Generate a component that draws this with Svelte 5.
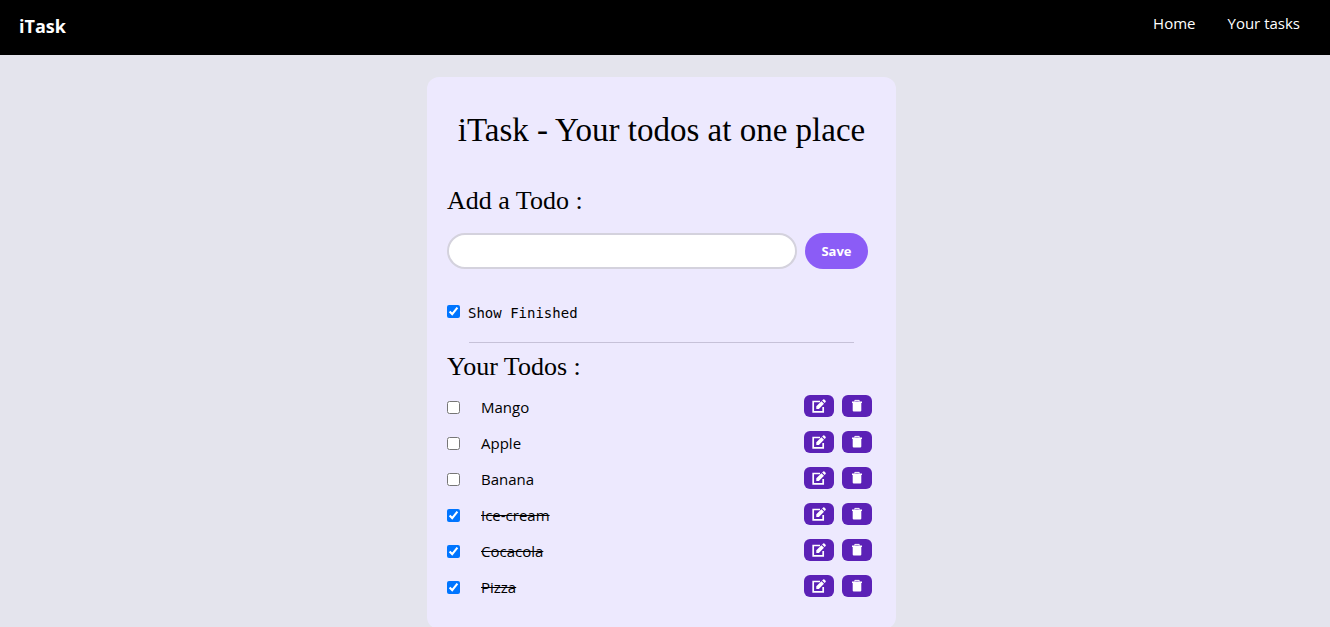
<script>
  let draft = $state('');
  let showFinished = $state(true);
  let todos = $state([
    { id: 1, text: 'Mango', done: false },
    { id: 2, text: 'Apple', done: false },
    { id: 3, text: 'Banana', done: false },
    { id: 4, text: 'Ice-cream', done: true },
    { id: 5, text: 'Cocacola', done: true },
    { id: 6, text: 'Pizza', done: true }
  ]);
  let nextId = 7;

  function save(event) {
    event.preventDefault();
    if (!draft.trim()) return;
    todos.push({ id: nextId++, text: draft.trim(), done: false });
    draft = '';
  }

  function remove(id) {
    todos = todos.filter((t) => t.id !== id);
  }

  function edit(todo) {
    draft = todo.text;
    remove(todo.id);
  }
</script>

<nav>
  <span class="brand">iTask</span>
  <ul class="links">
    <li><a href="#home">Home</a></li>
    <li><a href="#tasks">Your tasks</a></li>
  </ul>
</nav>

<main>
  <div class="card">
    <h1>iTask - Your todos at one place</h1>
    <h2><label for="todo">Add a Todo :</label></h2>
    <form onsubmit={save}>
      <input id="todo" class="field" type="text" bind:value={draft} />
      <button class="save" type="submit">Save</button>
    </form>
    <div class="show">
      <input id="show" type="checkbox" bind:checked={showFinished} />
      <label for="show">Show Finished</label>
    </div>
    <hr />
    <h2>Your Todos :</h2>
    <ul class="todos">
      {#each todos as todo (todo.id)}
        {#if showFinished || !todo.done}
          <li>
            <input id="todo-{todo.id}" type="checkbox" bind:checked={todo.done} />
            <label for="todo-{todo.id}" class:done={todo.done}>{todo.text}</label>
            <button class="action" type="button" aria-label="Edit" onclick={() => edit(todo)}>
              <svg viewBox="0 0 14 14" width="14" height="14">
                <path d="M8 2.5H1.2V12.8H11.2V8" fill="none" stroke="#fff" stroke-width="1.7" />
                <path d="M4.3 10V7.3L9.4 2.2L12 4.8L6.9 10Z M10.1 1.5L11.2.5Q11.8 0 12.4.5L13.6 1.7Q14.1 2.3 13.6 2.9L12.6 4Z" fill="#fff" />
              </svg>
            </button>
            <button class="action" type="button" aria-label="Delete" onclick={() => remove(todo.id)}>
              <svg viewBox="0 0 14 14" width="14" height="14">
                <path d="M4.8 2.6V1.4H9.2V2.6" fill="none" stroke="#fff" stroke-width="1" />
                <path d="M2 2.5H12V4.1H11.3V11.4Q11.3 12.5 10.2 12.5H3.8Q2.7 12.5 2.7 11.4V4.1H2Z" fill="#fff" />
              </svg>
            </button>
          </li>
        {/if}
      {/each}
    </ul>
  </div>
</main>

<style>
  :global(body) {
    background: #e4e4ed;
    overflow-x: hidden;
    scrollbar-width: none;
  }
  nav, main {
    box-sizing: border-box;
    font-family: "Segoe UI", "Open Sans", sans-serif;
  }
  nav {
    display: flex;
    justify-content: space-between;
    height: 55px;
    padding: 11px 30px 0 19px;
    background: #000;
    color: #fff;
  }
  .brand {
    font-size: 18px;
    line-height: 30px;
    font-weight: 700;
  }
  ul {
    list-style: none;
    margin: 0;
    padding: 0;
  }
  .links {
    display: flex;
    gap: 32px;
    font-size: 15px;
    line-height: 24px;
  }
  a {
    color: inherit;
    text-decoration: none;
  }
  main {
    padding: 22px 7px 0 0;
  }
  .card {
    box-sizing: border-box;
    max-width: 469px;
    min-height: 552px;
    margin: 0 auto;
    padding: 31px 20px 20px;
    border-radius: 12px;
    background: #ede9fe;
    color: #000;
  }
  h1, h2 {
    margin: 0;
    font-family: Georgia, "Liberation Serif", serif;
    font-weight: 400;
  }
  h1 {
    font-size: 33px;
    line-height: 44px;
    text-align: center;
  }
  h2 {
    font-size: 26px;
    line-height: 32px;
  }
  h1 + h2 {
    margin-top: 33px;
  }
  form {
    display: flex;
    gap: 8px;
    margin: 16px 8px 0 0;
  }
  .field {
    box-sizing: border-box;
    flex: 1;
    min-width: 0;
    height: 36px;
    padding: 4px 16px;
    border: 2px solid #d4d2dd;
    border-radius: 18px;
    background: #fff;
    font: inherit;
    outline: none;
  }
  .save {
    width: 63px;
    height: 36px;
    padding: 0;
    border: 0;
    border-radius: 18px;
    background: #8b5cf6;
    color: #fff;
    font: 700 13px "Segoe UI", "Open Sans", sans-serif;
  }
  input[type="checkbox"] {
    width: 13px;
    height: 13px;
    margin: 0;
    flex: none;
    accent-color: #0075ff;
  }
  .show {
    display: flex;
    align-items: baseline;
    gap: 8px;
    margin-top: 32px;
    font-family: Consolas, "DejaVu Sans Mono", monospace;
    font-size: 14px;
    line-height: 24px;
  }
  hr {
    height: 1px;
    margin: 17px 22px 8px;
    border: 0;
    background: #c6c1d8;
  }
  .todos li {
    display: flex;
    align-items: center;
    height: 36px;
    padding-right: 4px;
    font-size: 15px;
    line-height: 24px;
  }
  .todos {
    margin-top: 6px;
  }
  .todos label {
    margin-left: 21px;
    margin-right: auto;
  }
  .done {
    text-decoration: line-through;
  }
  .action {
    display: flex;
    align-items: center;
    justify-content: center;
    width: 30px;
    height: 22px;
    margin: 0 0 2px 8px;
    padding: 0;
    border: 0;
    border-radius: 6px;
    background: #5b21b6;
  }
</style>
